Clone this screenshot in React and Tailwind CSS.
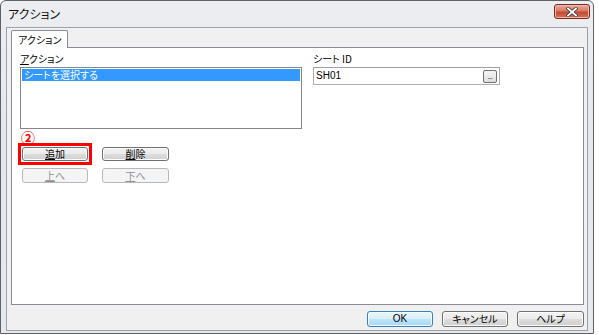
import React from 'react'

const jp = "font-['Noto_Sans_CJK_JP','Noto_Sans_CJK_SC',sans-serif] [font-feature-settings:'palt']"

function Btn({ children, disabled, primary, className = '' }) {
  const look = disabled
    ? 'border-[#b5b9bd] bg-[#f4f4f4] text-[#8f8f8f]'
    : primary
    ? 'border-[#3c7fb1] bg-[linear-gradient(#eaf6fd,#d9f0fc_50%,#bee6fd_50%,#a7d9f5)] text-black shadow-[inset_0_0_0_1px_#f4fbff]'
    : 'border-[#707070] bg-[linear-gradient(#f2f2f2,#ebebeb_50%,#dddddd_50%,#cfcfcf)] text-black shadow-[inset_0_0_0_1px_#fcfcfc]'
  return (
    <div className={`flex items-center justify-center rounded-[3px] border text-[10px] leading-none ${look} ${className}`}>
      {children}
    </div>
  )
}

export default function App() {
  return (
    <div className={`w-[599px] h-[335px] bg-white overflow-hidden ${jp}`}>
      {/* window frame */}
      <div className="w-[594px] h-[334px] flex flex-col rounded-t-[6px] border border-[#5e6266] bg-[linear-gradient(#eceef1,#e4e8ed_40%,#e6eaee)]">
        {/* title bar */}
        <div className="h-[26px] shrink-0 flex items-start justify-between">
          <span className="pl-[7px] pt-[6px] text-[12px] leading-[14px] text-[#111]">アクション</span>
          <div className="mt-[3px] mr-[3px] w-[36px] h-[15px] rounded-[3px] border border-[#7a2a20] bg-[linear-gradient(#eab0a0,#d67a66_45%,#c24a33_55%,#d3735c)] flex items-center justify-center shadow-[inset_0_0_0_1px_#f0b8aa]">
            <svg width="12" height="10" viewBox="0 0 12 10">
              <path d="M2 1.5 L10 8.5 M10 1.5 L2 8.5" stroke="#3b3b3b" strokeWidth="3.4" strokeLinecap="square" />
              <path d="M2 1.5 L10 8.5 M10 1.5 L2 8.5" stroke="#ffffff" strokeWidth="1.8" strokeLinecap="square" />
            </svg>
          </div>
        </div>

        {/* client area */}
        <div className="flex-1 mx-[5px] mb-[2px] flex flex-col border border-[#9aa3ad] bg-[#f0f0f0] pl-[4px] pr-[3px] pt-[2px]">
          {/* tab strip */}
          <div className="flex">
            <div className="relative z-10 -mb-px h-[18px] px-[6px] flex items-center bg-white border border-b-0 border-[#898c95] rounded-t-[2px] text-[10px] leading-none text-black">
              アクション
            </div>
          </div>

          {/* tab panel */}
          <div className="h-[258px] w-[573px] border border-[#898c95] bg-white pl-[8px] pt-[4px] flex gap-[11px]">
            {/* left column */}
            <div className="w-[282px] flex flex-col">
              <div className="h-[14px] text-[10px] leading-[14px] text-black">
                <span className="underline underline-offset-1">ア</span>クション
              </div>
              <div className="mt-[1px] h-[62px] border border-[#828790] bg-white p-[1px]">
                <div className="h-[12px] bg-[#3399ff] pl-[2px] text-[10px] leading-[12px] text-white">シートを選択する</div>
              </div>
              <div className="mt-[2px] h-[12px] pl-[1px] text-[14px] leading-[12px] font-bold text-[#ff0000]">②</div>
              <div className="flex items-center gap-[10px]">
                <div className="-ml-[2px] border-[3px] border-[#ff0000] px-[1px] py-[1px]">
                  <Btn className="w-[66px] h-[14px]">
                    <span className="underline underline-offset-1">追</span>加
                  </Btn>
                </div>
                <Btn className="w-[67px] h-[14px]">
                  <span className="underline underline-offset-1">削</span>除
                </Btn>
              </div>
              <div className="mt-[3px] ml-[2px] flex gap-[14px]">
                <Btn disabled className="w-[66px] h-[15px]">
                  <span className="underline underline-offset-1">上</span>へ
                </Btn>
                <Btn disabled className="w-[67px] h-[15px]">
                  <span className="underline underline-offset-1">下</span>へ
                </Btn>
              </div>
            </div>

            {/* right column */}
            <div className="w-[187px] flex flex-col">
              <div className="h-[14px] text-[10px] leading-[14px] text-black">シート ID</div>
              <div className="mt-[1px] h-[18px] border border-[#abadb3] border-t-[#9ca0a8] bg-white flex items-center justify-between pl-[2px] pr-[2px]">
                <span className="font-['Liberation_Sans',sans-serif] text-[10px] leading-none text-black">SH01</span>
                <div className="w-[14px] h-[13px] rounded-[2px] border border-[#707070] bg-[linear-gradient(#f6f6f6,#dcdcdc)] flex items-end justify-center pb-[2px]">
                  <span className="text-[7px] leading-none tracking-[-0.5px] text-[#333]">...</span>
                </div>
              </div>
            </div>
          </div>

          {/* dialog buttons */}
          <div className="mt-[6px] flex justify-end gap-[9px]">
            <Btn primary className="w-[66px] h-[16px]">
              <span className="font-['Liberation_Sans',sans-serif]">OK</span>
            </Btn>
            <Btn className="w-[66px] h-[16px]">キャンセル</Btn>
            <Btn className="w-[67px] h-[16px]">ヘルプ</Btn>
          </div>
        </div>
      </div>
    </div>
  )
}
